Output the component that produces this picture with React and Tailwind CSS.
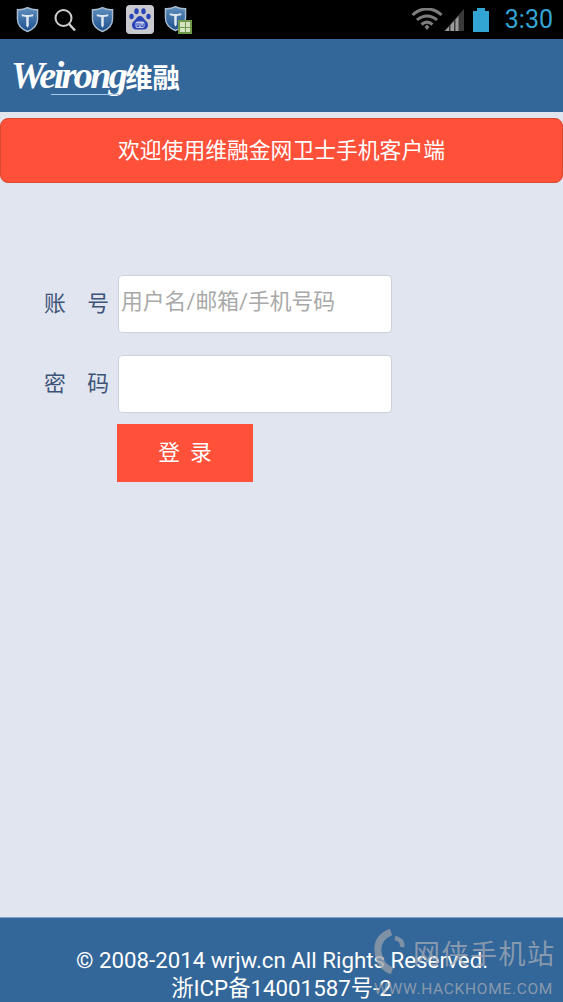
const cjk = '"Roboto","Noto Sans CJK SC",sans-serif';

function Shield({ id }) {
  return (
    <svg width="23" height="27" viewBox="0 0 24 27">
      <defs>
        <linearGradient id={id} x1="0" y1="0" x2="0" y2="1">
          <stop offset="0" stopColor="#5f8fbd" />
          <stop offset="1" stopColor="#1d4f8f" />
        </linearGradient>
      </defs>
      <path d="M12 1 C8 3 4 3.400 1.500 3.200 L1.500 13 C1.500 20 7 24 12 26 C17 24 22.500 20 22.500 13 L22.500 3.200 C20 3.400 16 3 12 1Z" fill={`url(#${id})`} stroke="#a8bccf" strokeWidth="1.500" />
      <path d="M6 8 C9 9 15 9 18 8 L18 10 L13.300 10.800 L13.300 20 L12 22 L10.700 20 L10.700 10.800 L6 10Z" fill="#dfe8f0" />
    </svg>
  );
}

function Search() {
  return (
    <svg width="22" height="24" viewBox="0 0 22 24" fill="none" stroke="#cfcfcf" strokeWidth="2">
      <circle cx="9.500" cy="10" r="8" />
      <path d="M15 16 L21 22.500" strokeWidth="2.500" />
    </svg>
  );
}

function Baidu() {
  return (
    <div className="w-[28px] h-[29px] rounded-[4px] bg-[#c9c9d0] flex items-center justify-center">
      <svg width="24" height="25" viewBox="0 0 24 24" fill="#2a44b8">
        <ellipse cx="3.500" cy="9" rx="2.200" ry="2.800" />
        <ellipse cx="8.500" cy="3.800" rx="2.200" ry="3" />
        <ellipse cx="15.500" cy="3.800" rx="2.200" ry="3" />
        <ellipse cx="20.500" cy="9" rx="2.200" ry="2.800" />
        <path d="M12 8.500 C9 8.500 8 12 5.500 14 C3 16 3.500 22 8 22 L16 22 C20.500 22 21 16 18.500 14 C16 12 15 8.500 12 8.500Z" />
        <rect x="7.500" y="14" width="9" height="6.500" rx="2" fill="#c9d0e8" />
        <path d="M9 15.500 V19 H11 V15.500 M13 16 V19 H15.200 V16" fill="none" stroke="#2a44b8" strokeWidth="1" />
      </svg>
    </div>
  );
}

function ShieldGrid() {
  return (
    <div className="relative w-[28px] h-[29px]">
      <Shield id="s3" />
      <div className="absolute right-0 bottom-0 w-[14px] h-[14px] bg-[#6f9a4a] grid grid-cols-2 gap-px p-[2px]">
        <div className="bg-[#d5e4c2]" />
        <div className="bg-[#d5e4c2]" />
        <div className="bg-[#d5e4c2]" />
        <div className="bg-[#d5e4c2]" />
      </div>
    </div>
  );
}

function Wifi() {
  return (
    <svg width="32" height="24" viewBox="0 0 32 24" fill="none" stroke="#7d7d7d">
      <path d="M1.500 7 C10 -1 22 -1 30.500 7" strokeWidth="3" />
      <path d="M6 12 C12 6.500 20 6.500 26 12" strokeWidth="3" />
      <path d="M10.500 16.500 C14 13.500 18 13.500 21.500 16.500" strokeWidth="3" />
      <path d="M13.500 19 L16 16.500 L18.500 19 L16 22Z" fill="#7d7d7d" stroke="none" />
    </svg>
  );
}

function Signal() {
  return (
    <svg width="20" height="22" viewBox="0 0 20 22">
      <path d="M0 22 L20 0 L20 22Z" fill="#3a3a3a" />
      <path d="M1 22 L5 17.500 L5 22Z M6.500 22 L6.500 16 L10 12 L10 22Z M11.500 22 L11.500 10.500 L14.500 7 L14.500 22Z" fill="#9b9b9b" />
    </svg>
  );
}

function Battery() {
  return (
    <div className="flex flex-col items-center">
      <div className="w-[8px] h-[3px] bg-[#33a5d5]" />
      <div className="w-[16px] h-[21px] bg-[#33a5d5]" />
    </div>
  );
}

function Field({ label, placeholder }) {
  return (
    <div className="flex items-center">
      <div className="w-[118px] pl-[44px] pr-[9px] flex justify-between text-[21.800px] leading-none text-[#3d5478]">
        <span>{label[0]}</span>
        <span>{label[1]}</span>
      </div>
      <div className="w-[274px] h-[58px] bg-white rounded-[4px] border border-[#ccd0d8] pl-[2px] pt-[12px] text-[21.800px] leading-[27px] text-[#a9a9a9]">
        {placeholder}
      </div>
    </div>
  );
}

export default function App() {
  return (
    <div className="relative w-[563px] h-[1002px] flex flex-col bg-[#e1e5ef] overflow-hidden" style={{ fontFamily: cjk }}>
      <div className="h-[39px] shrink-0 bg-black flex items-center pl-[16px] pr-[10px]">
        <div className="flex items-center">
          <Shield id="s1" />
          <div className="ml-[15px]"><Search /></div>
          <div className="ml-[15px]"><Shield id="s2" /></div>
          <div className="ml-[12px]"><Baidu /></div>
          <div className="ml-[10px]"><ShieldGrid /></div>
        </div>
        <div className="ml-auto flex items-center">
          <Wifi />
          <div className="ml-[1px]"><Signal /></div>
          <div className="ml-[9px]"><Battery /></div>
          <div className="ml-[16px] text-[25px] leading-none text-[#33a5d5]">3:30</div>
        </div>
      </div>

      <div className="h-[73px] shrink-0 bg-[#336699] flex items-center pl-[11px] pb-[1px]">
        <div className="relative flex items-baseline text-white">
          <span className="text-[38px] leading-none italic font-bold tracking-[-2.600px]" style={{ fontFamily: '"Liberation Serif",serif' }}>Weirong</span>
          <span className="text-[27.500px] leading-none font-bold">维融</span>
          <div className="absolute left-[40px] bottom-[-1px] w-[68px] h-px bg-[#a9cbe6]" />
        </div>
      </div>

      <div className="mt-[6px] h-[65px] shrink-0 bg-[#ff5039] border border-[#d8492f] rounded-[8px] flex items-center justify-center text-white text-[21.800px] leading-none">
        欢迎使用维融金网卫士手机客户端
      </div>

      <div className="mt-[92px] flex flex-col gap-[22px]">
        <Field label="账号" placeholder="用户名/邮箱/手机号码" />
        <Field label="密码" placeholder="" />
      </div>

      <div className="mt-[11px] ml-[117px] w-[136px] h-[58px] bg-[#ff5039] flex items-center justify-center gap-[10px] text-[21.800px] leading-none text-white">
        <span>登</span>
        <span>录</span>
      </div>

      <div className="mt-auto h-[85px] shrink-0 bg-[#336699] border-t border-[#7f9fc4] pt-[28px] text-white text-[22.300px] leading-[28px] text-center">
        <div className="pl-[1px]">© 2008-2014 wrjw.cn All Rights Reserved.</div>
        <div>浙ICP备14001587号-2</div>
      </div>

      <div className="absolute left-[374px] top-[929px] w-[182px] h-[70px] opacity-75 text-[#a3abb5]">
        <svg width="32" height="46" viewBox="0 0 32 46" fill="none">
          <path d="M17 3 C7 7 3 14 4 23 C5 32 10 39 18 42" stroke="#98a0aa" strokeWidth="7" />
          <path d="M21 9 C26 10 29 13 28 18" stroke="#98a0aa" strokeWidth="4.500" />
        </svg>
        <div className="absolute left-[39px] top-[11px] text-[27px] leading-[30px] tracking-[1.500px] whitespace-nowrap">网侠手机站</div>
        <div className="absolute left-0 top-[51px] text-[15.500px] leading-[18px] tracking-[0.700px] whitespace-nowrap">WWW.HACKHOME.COM</div>
      </div>
    </div>
  );
}
